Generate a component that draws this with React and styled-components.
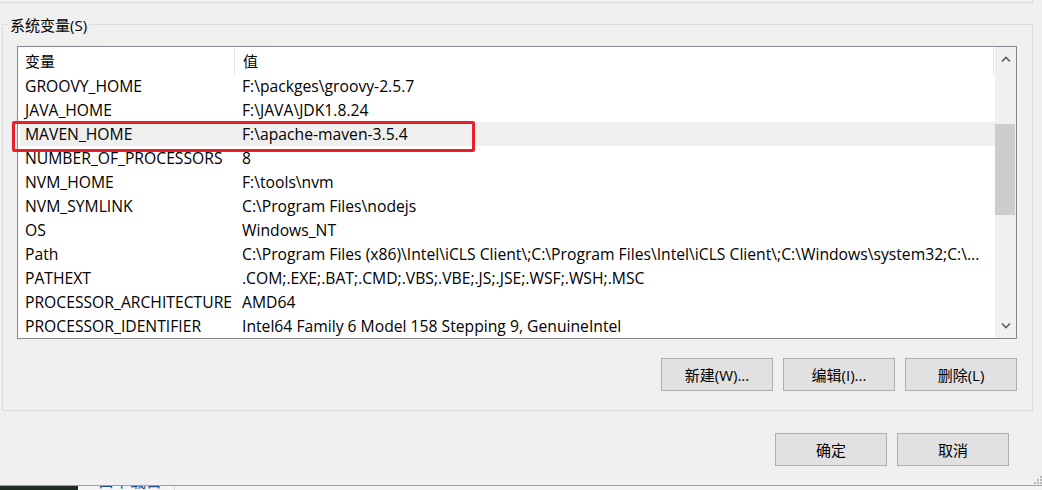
import React from "react";
import styled, { createGlobalStyle } from "styled-components";

const GlobalStyle = createGlobalStyle`
  html, body {
    margin: 0;
    padding: 0;
    background: #f0f0f0;
  }
  body {
    font-family: "Open Sans", "Noto Sans CJK SC", sans-serif;
    font-size: 15px;
    color: #000;
  }
`;

// environment variables shown in the list
const variables = [
  ["GROOVY_HOME", "F:\\packges\\groovy-2.5.7"],
  ["JAVA_HOME", "F:\\JAVA\\JDK1.8.24"],
  ["MAVEN_HOME", "F:\\apache-maven-3.5.4"],
  ["NUMBER_OF_PROCESSORS", "8"],
  ["NVM_HOME", "F:\\tools\\nvm"],
  ["NVM_SYMLINK", "C:\\Program Files\\nodejs"],
  ["OS", "Windows_NT"],
  [
    "Path",
    "C:\\Program Files (x86)\\Intel\\iCLS Client\\;C:\\Program Files\\Intel\\iCLS Client\\;C:\\Windows\\system32;C:\\...",
  ],
  ["PATHEXT", ".COM;.EXE;.BAT;.CMD;.VBS;.VBE;.JS;.JSE;.WSF;.WSH;.MSC"],
  ["PROCESSOR_ARCHITECTURE", "AMD64"],
  ["PROCESSOR_IDENTIFIER", "Intel64 Family 6 Model 158 Stepping 9, GenuineIntel"],
];

export default function App() {
  return (
    <>
      <GlobalStyle />
      <Page>
        <Window>
          {/* bottom edge of the user variables group above */}
          <PrevGroup />

          <GroupBox>
            <Legend>系统变量(S)</Legend>

            <ListBox>
              <ListContent>
                <HeaderRow>
                  <HeaderCell>变量</HeaderCell>
                  <HeaderCell>值</HeaderCell>
                </HeaderRow>
                {variables.map(([name, value]) => (
                  <Row key={name} selected={name === "MAVEN_HOME"}>
                    <NameCell>{name}</NameCell>
                    <ValueCell>{value}</ValueCell>
                    {name === "MAVEN_HOME" && <Highlight />}
                  </Row>
                ))}
              </ListContent>

              <ScrollBar>
                <ArrowBox>
                  <svg width="10" height="6" viewBox="0 0 10 6">
                    <polyline points="1,5.5 5,1.5 9,5.5" fill="none" stroke="#606060" strokeWidth="1.6" />
                  </svg>
                </ArrowBox>
                <Thumb />
                <Track />
                <ArrowBox>
                  <svg width="10" height="6" viewBox="0 0 10 6">
                    <polyline points="1,0.5 5,4.5 9,0.5" fill="none" stroke="#606060" strokeWidth="1.6" />
                  </svg>
                </ArrowBox>
              </ScrollBar>
            </ListBox>

            <ButtonRow>
              <Button>新建(W)...</Button>
              <Button>编辑(I)...</Button>
              <Button>删除(L)</Button>
            </ButtonRow>
          </GroupBox>

          <DialogButtons>
            <Button>确定</Button>
            <Button>取消</Button>
          </DialogButtons>

          <Grip>
            <svg width="8" height="8" viewBox="0 0 8 8">
              <rect x="6" y="0" width="2" height="2" fill="#b8b8b8" />
              <rect x="3" y="3" width="2" height="2" fill="#b8b8b8" />
              <rect x="6" y="3" width="2" height="2" fill="#b8b8b8" />
              <rect x="0" y="6" width="2" height="2" fill="#b8b8b8" />
              <rect x="3" y="6" width="2" height="2" fill="#b8b8b8" />
              <rect x="6" y="6" width="2" height="2" fill="#b8b8b8" />
            </svg>
          </Grip>
        </Window>

        {/* what peeks out below the dialog */}
        <Behind>
          <DarkTile />
          <PeekText>口下载目</PeekText>
          <PeekDivider />
        </Behind>
      </Page>
    </>
  );
}

const Page = styled.div`
  width: 1042px;
  height: 490px;
  display: flex;
  flex-direction: column;
  overflow: hidden;
`;

const Window = styled.div`
  position: relative;
  flex: 1;
  display: flex;
  flex-direction: column;
  background: #f0f0f0;
  border-bottom: 1px solid #a0a0a0;
`;

const PrevGroup = styled.div`
  width: 1033px;
  height: 3px;
  box-sizing: border-box;
  border-right: 1px solid #dcdcdc;
  border-bottom: 1px solid #dcdcdc;
`;

const GroupBox = styled.div`
  margin: 21px 0 0 2px;
  width: 1031px;
  box-sizing: border-box;
  border: 1px solid #dcdcdc;
  padding: 0 15px 19px 14px;
  display: flex;
  flex-direction: column;
`;

const Legend = styled.div`
  width: fit-content;
  margin: -10px 0 0 -9px;
  padding: 0 2px;
  line-height: 20px;
  background: #f0f0f0;
`;

const ListBox = styled.div`
  margin-top: 11px;
  height: 293px;
  box-sizing: border-box;
  border: 1px solid #828790;
  background: #fff;
  display: flex;
  font-size: 15.7px;
`;

const ListContent = styled.div`
  flex: 1;
  display: flex;
  flex-direction: column;
`;

const HeaderRow = styled.div`
  height: 27px;
  box-sizing: border-box;
  padding-top: 1px;
  display: grid;
  grid-template-columns: 218px 1fr;
`;

const HeaderCell = styled.div`
  display: flex;
  align-items: center;
  padding-left: 7px;
  padding-bottom: 1px;
  border-right: 1px solid #e5e5e5;
  margin-right: 1px;
  font-size: 15px;
`;

const Row = styled.div`
  position: relative;
  height: 24px;
  display: grid;
  grid-template-columns: 217px 1fr;
  align-items: center;
  white-space: nowrap;
  margin-left: 2px;
  padding-right: 2px;
  background: ${(p) => (p.selected ? "#efefef" : "transparent")};
`;

const NameCell = styled.div`
  padding-left: 5px;
  overflow: visible;
`;

const ValueCell = styled.div`
  padding-left: 5px;
  overflow: hidden;
`;

const Highlight = styled.div`
  position: absolute;
  left: -8px;
  top: -1px;
  width: 463px;
  height: 31px;
  box-sizing: border-box;
  border: 3px solid #e8202a;
  border-radius: 2px;
  pointer-events: none;
`;

const ScrollBar = styled.div`
  width: 21px;
  display: flex;
  flex-direction: column;
  background: #f0f0f0;
`;

const ArrowBox = styled.div`
  height: 24px;
  display: flex;
  align-items: center;
  justify-content: center;
`;

const Thumb = styled.div`
  margin-top: 53px;
  height: 91px;
  width: 20px;
  background: #cdcdcd;
`;

const Track = styled.div`
  flex: 1;
`;

const ButtonRow = styled.div`
  margin-top: 19px;
  display: flex;
  justify-content: flex-end;
  gap: 10px;
`;

const Button = styled.button`
  width: 112px;
  height: 33px;
  box-sizing: border-box;
  border: 1px solid #adadad;
  background: #e1e1e1;
  font-family: "Open Sans", "Noto Sans CJK SC", sans-serif;
  font-size: 15px;
  color: #000;
  padding: 0;
`;

const DialogButtons = styled.div`
  margin-top: 22px;
  padding-right: 33px;
  display: flex;
  justify-content: flex-end;
  gap: 10px;
`;

const Grip = styled.div`
  position: absolute;
  right: 0;
  bottom: 1px;
  line-height: 0;
`;

const Behind = styled.div`
  height: 4px;
  display: flex;
  background: #f5f5f5;
  overflow: hidden;
`;

const DarkTile = styled.div`
  width: 78px;
  background: #1e2a22;
`;

const PeekText = styled.div`
  margin: -13px 0 0 20px;
  font-size: 16px;
  line-height: 16px;
  color: #1c4f9c;
`;

const PeekDivider = styled.div`
  width: 1px;
  margin-left: 12px;
  background: #d8d8d8;
`;
